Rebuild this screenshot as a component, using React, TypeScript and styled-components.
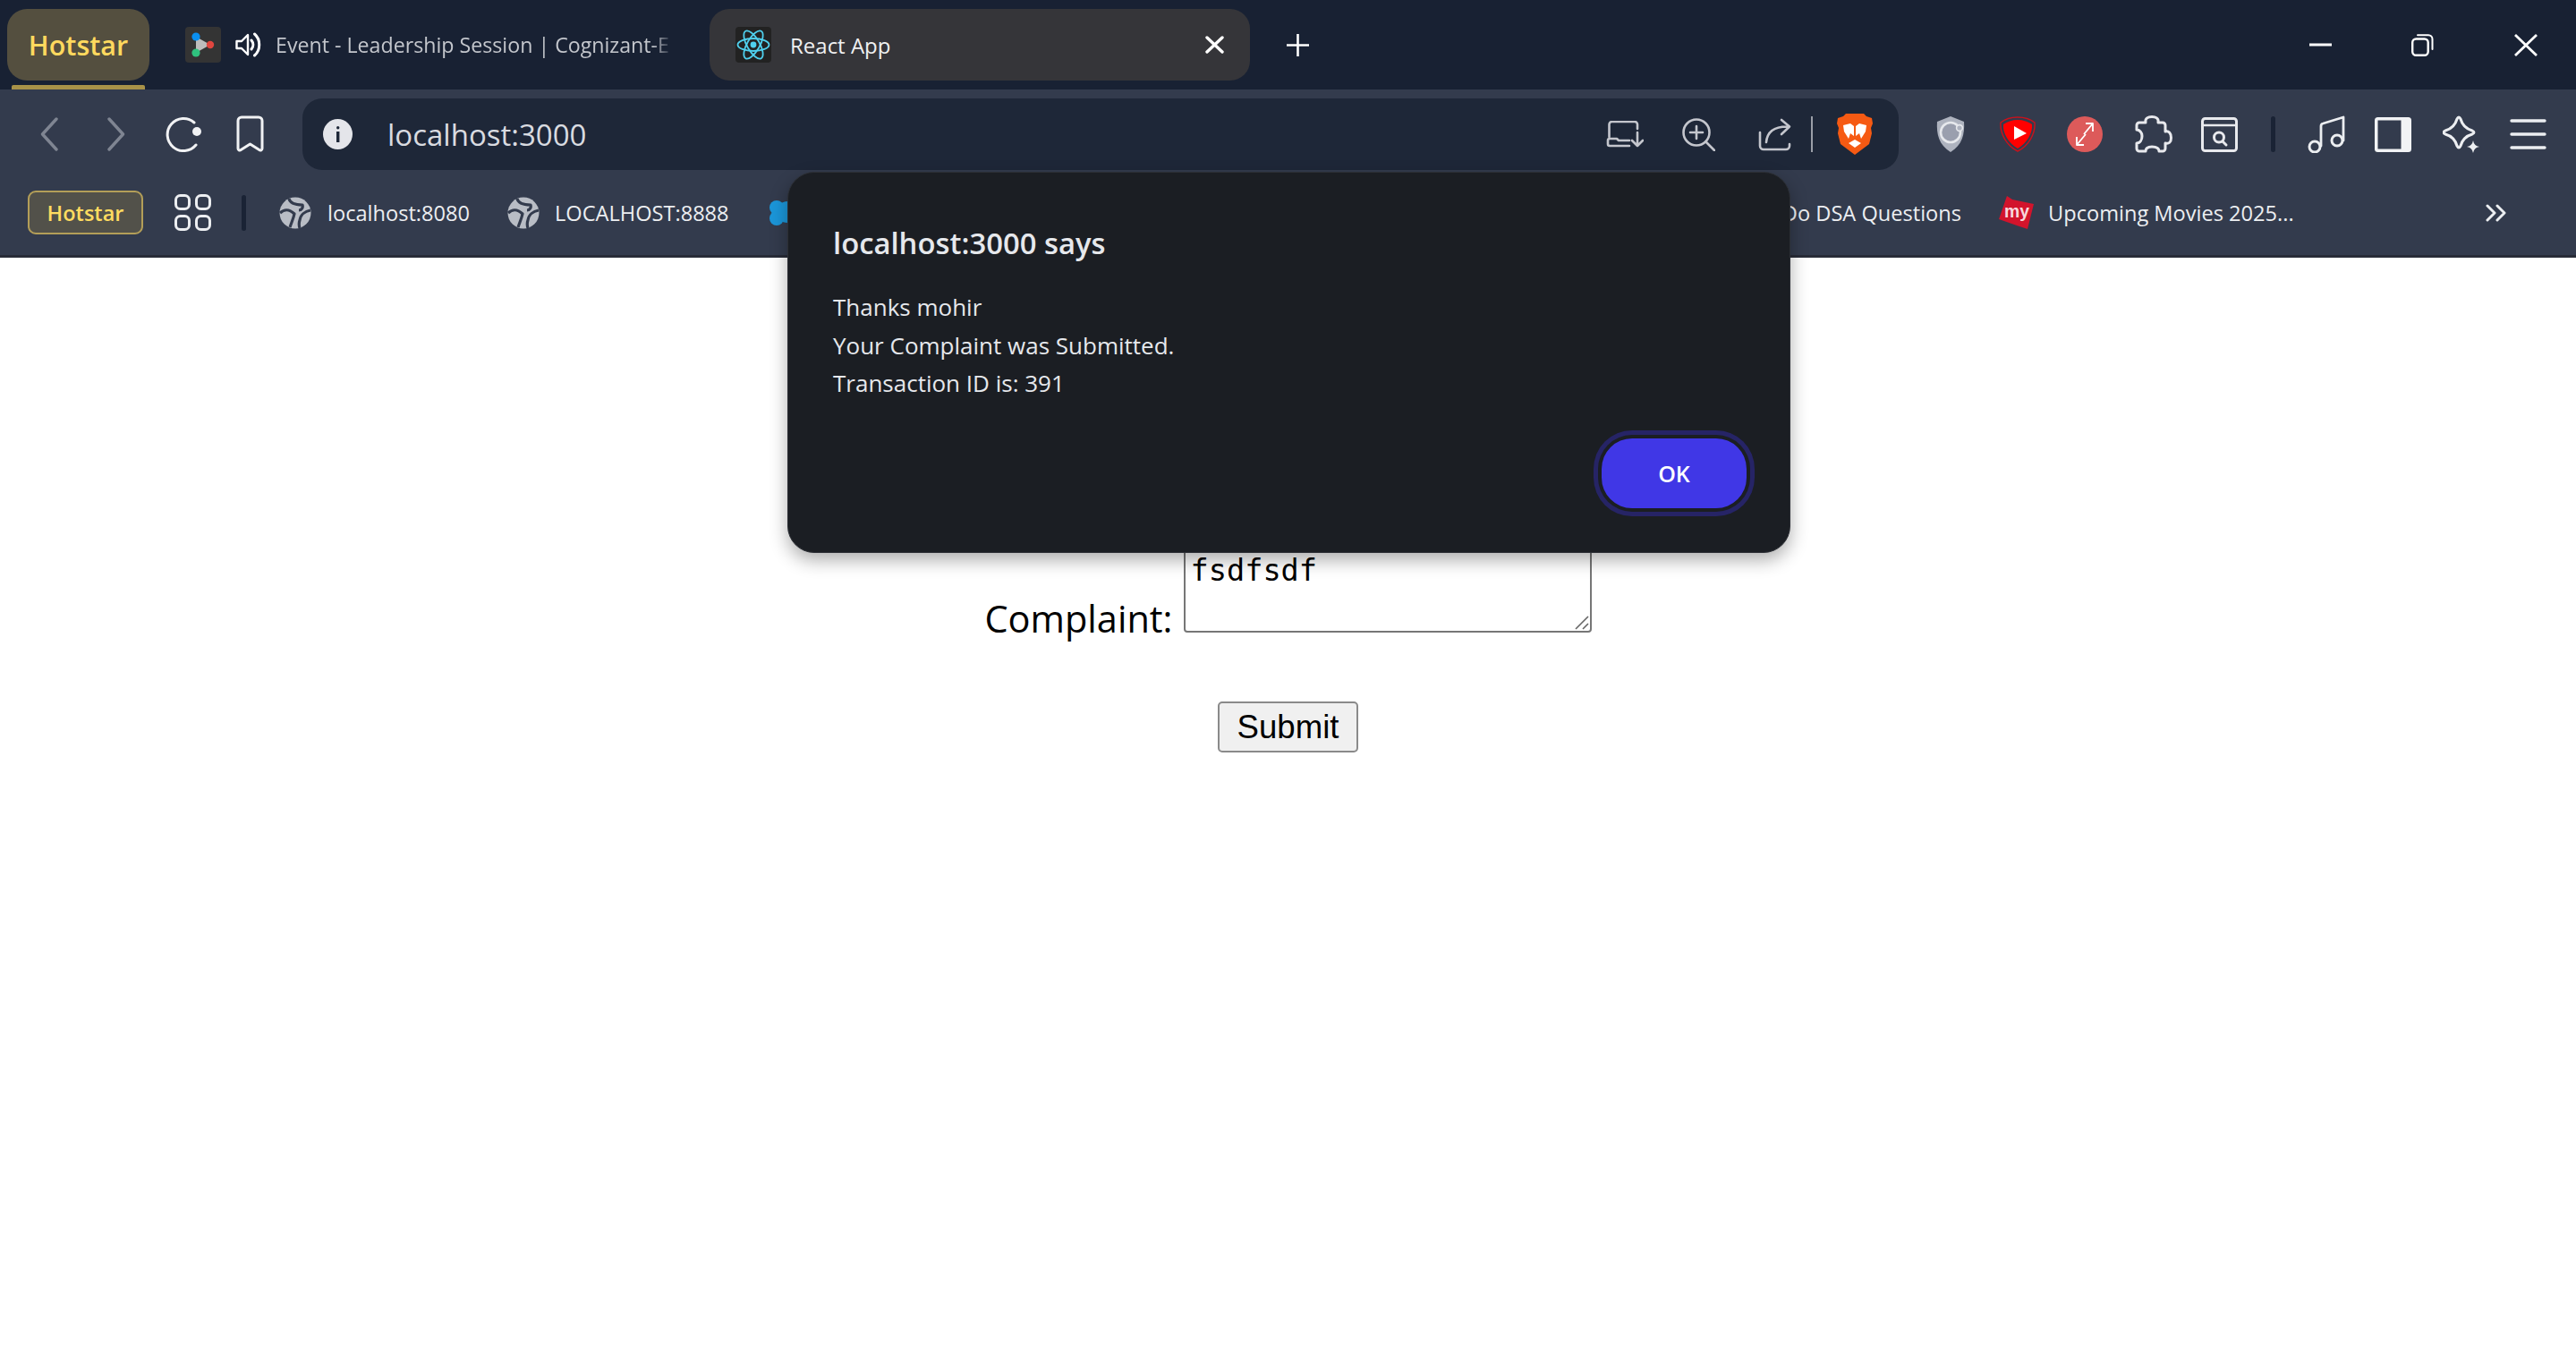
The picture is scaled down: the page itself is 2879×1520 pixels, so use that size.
import React from "react";
import styled, { createGlobalStyle } from "styled-components";

const UI = `"Open Sans", "Noto Sans", "Liberation Sans", sans-serif`;
const TITLE_BG = "#182133";
const BAR_BG = "#333b4d";
const FIELD_BG = "#1e2738";
const DIALOG_BG = "#1b1e23";
const ICON = "#eceef1";

const Global = createGlobalStyle`
  html, body { margin: 0; padding: 0; background: #fff; }
  body { font-family: ${UI}; }
`;

const Shell = styled.div`
  position: relative;
  width: 2879px;
  height: 1520px;
  overflow: hidden;
  background: #fff;
`;

const TitleBar = styled.div`
  display: flex;
  align-items: center;
  height: 100px;
  background: ${TITLE_BG};
`;

const Pinned = styled.div`
  display: flex;
  flex-direction: column;
  align-items: center;
  align-self: flex-start;
  width: 159px;
  margin: 10px 0 0 8px;
`;

const PinnedFace = styled.div`
  display: flex;
  align-items: center;
  justify-content: center;
  width: 100%;
  height: 80px;
  border-radius: 22px;
  background: #544f3f;
  color: #ffd95e;
  font-size: 30.5px;
  font-weight: 600;
`;

const PinnedLine = styled.div`
  width: 149px;
  height: 5px;
  margin-top: 5px;
  border-radius: 2px 2px 0 0;
  background: #a89248;
`;

const Tab = styled.div<{ $active?: boolean }>`
  display: flex;
  align-items: center;
  flex: none;
  height: 80px;
  width: ${(p) => (p.$active ? "604px" : "545px")};
  margin-left: ${(p) => (p.$active ? "41px" : "40px")};
  padding: ${(p) => (p.$active ? "0 29px" : "0")};
  box-sizing: border-box;
  border-radius: 22px;
  background: ${(p) => (p.$active ? "#353539" : "transparent")};
`;

const TabLabel = styled.div<{ $active?: boolean; $ml: number }>`
  flex: 1;
  min-width: 0;
  margin-left: ${(p) => p.$ml}px;
  overflow: hidden;
  white-space: nowrap;
  font-size: ${(p) => (p.$active ? "24px" : "23.2px")};
  color: ${(p) => (p.$active ? "#eff0f1" : "#c3c6cc")};
  ${(p) =>
    p.$active
      ? ""
      : "-webkit-mask-image: linear-gradient(to right, #000 95%, transparent 100%); mask-image: linear-gradient(to right, #000 95%, transparent 100%);"}
`;

const WindowControls = styled.div`
  display: flex;
  align-items: center;
  margin-left: auto;
  padding-right: 43px;
`;

const Glyph = styled.svg<{ $ml?: number }>`
  display: block;
  flex: none;
  margin-left: ${(p) => p.$ml ?? 0}px;
`;

const Toolbar = styled.div`
  display: flex;
  align-items: center;
  height: 80px;
  padding: 10px 0 0 45px;
  background: ${BAR_BG};
`;

const Omnibox = styled.div`
  display: flex;
  align-items: center;
  flex: none;
  width: 1784px;
  height: 80px;
  margin-left: 43px;
  padding: 0 29px 0 23px;
  box-sizing: border-box;
  border-radius: 22px;
  background: ${FIELD_BG};
`;

const Url = styled.div`
  flex: 1;
  margin-left: 39px;
  font-size: 33px;
  color: #d9dbe0;
`;

const ThinRule = styled.div`
  flex: none;
  width: 2px;
  height: 40px;
  margin-left: 22px;
  background: #9a9ea7;
`;

const DarkRule = styled.div<{ $ml: number; $h: number }>`
  flex: none;
  width: 5px;
  height: ${(p) => p.$h}px;
  margin-left: ${(p) => p.$ml}px;
  border-radius: 3px;
  background: #1a2335;
`;

const BookmarkBar = styled.div`
  display: flex;
  align-items: center;
  height: 95px;
  padding: 0 78px 0 31px;
  background: ${BAR_BG};
  border-bottom: 3px solid #282c38;
`;

const HotstarChip = styled.div`
  display: flex;
  align-items: center;
  justify-content: center;
  flex: none;
  width: 129px;
  height: 49px;
  box-sizing: border-box;
  border: 2.5px solid #b39e58;
  border-radius: 9px;
  background: #52514a;
  color: #ffdc60;
  font-size: 23.5px;
  font-weight: 600;
`;

const Mark = styled.div<{ $ml: number; $w: number; $right?: boolean }>`
  flex: none;
  width: ${(p) => p.$w}px;
  margin-left: ${(p) => p.$ml}px;
  font-size: 23.6px;
  color: #eceef1;
  white-space: nowrap;
  text-align: ${(p) => (p.$right ? "right" : "left")};
`;

const BookmarkEnd = styled.div`
  display: flex;
  align-items: center;
  margin-left: auto;
`;

const Page = styled.main`
  padding-top: 323px;
  text-align: center;
  color: #000;
`;

const FormRow = styled.div`
  display: block;
`;

const FieldLabel = styled.label`
  font-size: 41.5px;
  margin-right: 12px;
`;

const AreaWrap = styled.span`
  position: relative;
  display: inline-block;
  font-size: 0;
  line-height: 0;
`;

const Area = styled.textarea`
  display: inline-block;
  width: 456px;
  height: 96px;
  padding: 6px 6px;
  box-sizing: border-box;
  border: 2px solid #767676;
  border-radius: 4px;
  resize: none;
  outline: none;
  overflow: hidden;
  font-family: "DejaVu Sans Mono", "Liberation Mono", monospace;
  font-size: 33.6px;
  line-height: 38px;
  color: #000;
  background: #fff;
`;

const Grip = styled.svg`
  position: absolute;
  right: 2px;
  bottom: 2px;
`;

const SubmitRow = styled.div`
  margin-top: 65px;
`;

const Submit = styled.button`
  width: 157px;
  height: 57px;
  padding: 0;
  box-sizing: border-box;
  border: 2px solid #8a8a8a;
  border-radius: 5px;
  background: #f0f0f0;
  color: #000;
  font-family: "Liberation Sans", Arial, sans-serif;
  font-size: 36.6px;
`;

const Dialog = styled.div`
  position: absolute;
  left: 880px;
  top: 192px;
  width: 1121px;
  height: 426px;
  padding: 50px 48px 0 50px;
  box-sizing: border-box;
  border: 1px solid #2c2f35;
  border-radius: 30px;
  background: ${DIALOG_BG};
  box-shadow: 0 8px 20px rgba(0, 0, 0, 0.32);
  color: #e6e8ec;
`;

const DialogTitle = styled.div`
  height: 58px;
  line-height: 58px;
  font-size: 32.8px;
  font-weight: 600;
`;

const DialogBody = styled.div`
  margin-top: 21px;
  font-size: 26px;
  line-height: 42.6px;
`;

const DialogActions = styled.div`
  display: flex;
  justify-content: flex-end;
  margin-top: 40px;
`;

const OkButton = styled.button`
  width: 162px;
  height: 78px;
  border: 0;
  border-radius: 34px;
  background: #4037e6;
  color: #fff;
  font-family: ${UI};
  font-size: 25px;
  font-weight: 600;
  box-shadow: 0 0 0 4px ${DIALOG_BG}, 0 0 0 9px #262466;
`;

const s = { fill: "none", strokeLinecap: "round" as const, strokeLinejoin: "round" as const };

const Globe = ({ ml }: { ml: number }) => (
  <Glyph $ml={ml} width="36" height="36" viewBox="0 0 36 36">
    <circle cx="18" cy="18" r="17.5" fill="#b9bdc5" />
    <path
      fill="none"
      stroke={BAR_BG}
      strokeWidth="3.2"
      strokeLinejoin="round"
      d="M1 18 C5 14 11 13 17 19 C16 24 14 28 12 34 M11 2 C12 7 18 9 26 9 C27 12 25 15 22 15 M35 15 C29 16 24 20 23 26 C22 29 22 32 23 35"
    />
  </Glyph>
);

export default function App() {
  return (
    <Shell>
      <Global />
      <TitleBar>
        <Pinned>
          <PinnedFace>Hotstar</PinnedFace>
          <PinnedLine />
        </Pinned>
        <Tab>
          <Glyph width="40" height="40" viewBox="0 0 40 40">
            <rect width="40" height="40" rx="4" fill="#343434" />
            <path d="M12 11 L28 20 L12 29 Z" fill="#bdbdbd" />
            <circle cx="12" cy="11" r="4.6" fill="#0a8ff0" />
            <circle cx="28" cy="20" r="4.2" fill="#e0463f" />
            <circle cx="12" cy="29" r="4.6" fill="#2fc27e" />
          </Glyph>
          <Glyph $ml={16} width="29" height="28" viewBox="0 0 29 28">
            <path d="M1.5 10 H7 L14 3 V25 L7 18 H1.5 Z" {...s} stroke="#fff" strokeWidth="2.4" />
            <path d="M18 9 C20.5 12 20.5 16 18 19 M21.5 2 C28.5 8 28.5 20 21.5 26" {...s} stroke="#fff" strokeWidth="3" />
          </Glyph>
          <TabLabel $ml={16}>Event - Leadership Session | Cognizant-E</TabLabel>
        </Tab>
        <Tab $active>
          <Glyph width="40" height="40" viewBox="0 0 40 40">
            <rect width="40" height="40" rx="4" fill="#222" />
            <g fill="none" stroke="#4fd0ee" strokeWidth="1.8">
              <ellipse cx="20" cy="20" rx="17.5" ry="7" />
              <ellipse cx="20" cy="20" rx="17.5" ry="7" transform="rotate(60 20 20)" />
              <ellipse cx="20" cy="20" rx="17.5" ry="7" transform="rotate(120 20 20)" />
            </g>
            <circle cx="20" cy="20" r="3.4" fill="#4fd0ee" />
          </Glyph>
          <TabLabel $active $ml={21}>React App</TabLabel>
          <Glyph width="21" height="20" viewBox="0 0 21 20">
            <path d="M2 2 L19 18 M19 2 L2 18" {...s} stroke="#fff" strokeWidth="3.4" />
          </Glyph>
        </Tab>
        <Glyph $ml={40} width="27" height="27" viewBox="0 0 27 27">
          <path d="M13.5 1 V26 M1 13.5 H26" {...s} stroke="#fff" strokeWidth="2.6" strokeLinecap="butt" />
        </Glyph>
        <WindowControls>
          <Glyph width="25" height="4" viewBox="0 0 25 4">
            <rect width="25" height="3" y="0.5" fill="#fff" />
          </Glyph>
          <Glyph $ml={89} width="25" height="25" viewBox="0 0 25 25">
            <rect x="1.2" y="5.5" width="17.5" height="18.3" rx="4" {...s} stroke="#fff" strokeWidth="2.4" />
            <path d="M7 1.2 H19 a4.5 4.5 0 0 1 4.5 4.5 V17" {...s} stroke="#fff" strokeWidth="2" />
          </Glyph>
          <Glyph $ml={90} width="26" height="25" viewBox="0 0 26 25">
            <path d="M1 1 L25 24 M25 1 L1 24" {...s} stroke="#fff" strokeWidth="2.8" strokeLinecap="butt" />
          </Glyph>
        </WindowControls>
      </TitleBar>

      <Toolbar>
        <Glyph width="20" height="38" viewBox="0 0 20 38">
          <path d="M18 2 L2.5 19 L18 36" {...s} stroke="#7f8592" strokeWidth="3.4" />
        </Glyph>
        <Glyph $ml={55} width="20" height="38" viewBox="0 0 20 38">
          <path d="M2 2 L17.5 19 L2 36" {...s} stroke="#7f8592" strokeWidth="3.4" />
        </Glyph>
        <Glyph $ml={45} width="41" height="40" viewBox="0 0 41 40">
          <path d="M32 7 A18 18 0 1 0 34 32" {...s} stroke="#f1f2f4" strokeWidth="3" />
          <circle cx="35" cy="17" r="5" fill="#f1f2f4" />
        </Glyph>
        <Glyph $ml={38} width="31" height="42" viewBox="0 0 31 42">
          <path
            d="M2 6 a4 4 0 0 1 4-4 H25 a4 4 0 0 1 4 4 V37 a2 2 0 0 1-3.2 1.6 L15.5 32 5.2 38.6 A2 2 0 0 1 2 37 Z"
            {...s}
            stroke="#f1f2f4"
            strokeWidth="3"
          />
        </Glyph>
        <Omnibox>
          <Glyph width="33" height="34" viewBox="0 0 33 34">
            <ellipse cx="16.5" cy="17" rx="16.5" ry="17" fill="#e4e5ea" />
            <rect x="15" y="14" width="3.4" height="12" fill={FIELD_BG} />
            <rect x="15" y="8" width="3.4" height="3.4" rx="1.7" fill={FIELD_BG} />
          </Glyph>
          <Url>localhost:3000</Url>
          <Glyph width="42" height="30" viewBox="0 0 42 30">
            <path d="M3.5 18 V4 a3 3 0 0 1 3-3 H32 a3 3 0 0 1 3 3 V9" {...s} stroke="#c4c6cd" strokeWidth="2.6" />
            <path d="M2 22 a2 2 0 0 1 2-2 H12 l2 2 H26 M2 22 v4 a2 2 0 0 0 2 2 H26" {...s} stroke="#c4c6cd" strokeWidth="2.6" />
            <path d="M35 13 V28 M29 22 L35 28 L41 22" {...s} stroke="#c4c6cd" strokeWidth="2.6" />
          </Glyph>
          <Glyph $ml={43} width="37" height="37" viewBox="0 0 37 37">
            <circle cx="16" cy="16" r="14.5" {...s} stroke="#c4c6cd" strokeWidth="2.6" />
            <path d="M26.5 26.5 L36 36 M16 9 V23 M9 16 H23" {...s} stroke="#c4c6cd" strokeWidth="2.6" />
          </Glyph>
          <Glyph $ml={48} width="37" height="37" viewBox="0 0 37 37">
            <path d="M2 16 V31 a4 4 0 0 0 4 4 H31 a4 4 0 0 0 4-4 V29" {...s} stroke="#c4c6cd" strokeWidth="2.6" />
            <path d="M9 27 C10 15 18 9 34 9.5 M26 2 L35 9.5 L26 18" {...s} stroke="#c4c6cd" strokeWidth="2.6" />
          </Glyph>
          <ThinRule />
          <Glyph $ml={27} width="40" height="46" viewBox="0 0 40 46">
            <path d="M10 0 H30 L33 3 L39 5 L40 11 L38 16 L39 22 L36 34 L20 46 L4 34 L1 22 L2 16 L0 11 L1 5 L7 3 Z" fill="#f65a13" />
            <path d="M7 13 L15 11 L19 14 V25 L15 22 L13 28 L8 20 Z M33 13 L25 11 L21 14 V25 L25 22 L27 28 L32 20 Z" fill="#fff" />
            <path d="M13 33 L20 29 L27 33 L20 38 Z" fill="#fff" />
          </Glyph>
        </Omnibox>
        <Glyph $ml={42} width="32" height="40" viewBox="0 0 32 40">
          <path d="M16 0 L31 6 C32 20 29 32 16 40 C3 32 0 20 1 6 Z" fill="#aeb3bf" />
          <circle cx="16" cy="18" r="11" fill="#9a9fae" stroke="#e6e8ec" strokeWidth="2.6" />
          <circle cx="26" cy="13" r="3.4" fill="#aeb3bf" stroke="#e6e8ec" strokeWidth="1.6" />
        </Glyph>
        <Glyph $ml={39} width="40" height="40" viewBox="0 0 40 40">
          <path d="M20 1 C27 1 34 3 39 7 C40 20 32 33 20 39 C8 33 0 20 1 7 C6 3 13 1 20 1 Z" fill="none" stroke="#c9121c" strokeWidth="1.4" />
          <path d="M20 4 C26 4 32 6 36 9 C37 19 30 30 20 36 C10 30 3 19 4 9 C8 6 14 4 20 4 Z" fill="#ff0000" />
          <path d="M16 11 L30 19 L16 26 Z" fill="#fff" />
        </Glyph>
        <Glyph $ml={35} width="40" height="40" viewBox="0 0 40 40">
          <circle cx="20" cy="20" r="20" fill="#dd5a5a" />
          <path d="M21 8 H29 V17 M29 8 L19 20 M11 23 V32 H19 M11 32 L21 20" {...s} stroke="#fff" strokeWidth="1.8" strokeLinecap="butt" />
        </Glyph>
        <Glyph $ml={36} width="42" height="42" viewBox="0 0 42 42">
          <path
            d="M12 8 C11 3 15 1.5 19 1.5 C23 1.5 27 3 26 8 H31 a3 3 0 0 1 3 3 V18 C38 17 40.5 20 40.5 25 C40.5 30 38 32 34 31 V37 a3 3 0 0 1-3 3 H27 C27 37 24 35 19 35 C14 35 12 37 12 40 H5 a3 3 0 0 1-3-3 V31 C6 31 8 27 8 23 C8 19 5 16 2 16 V11 a3 3 0 0 1 3-3 Z"
            {...s}
            stroke="#e8e9ed"
            strokeWidth="3"
          />
        </Glyph>
        <Glyph $ml={32} width="41" height="39" viewBox="0 0 41 39">
          <rect x="1.5" y="1.5" width="38" height="36" rx="3" {...s} stroke="#e8e9ed" strokeWidth="3" />
          <path d="M2 9 H39" {...s} stroke="#e8e9ed" strokeWidth="2.5" />
          <circle cx="20" cy="22.5" r="5.5" {...s} stroke="#e8e9ed" strokeWidth="3" />
          <path d="M24 27 L28 31" {...s} stroke="#e8e9ed" strokeWidth="3" />
        </Glyph>
        <DarkRule $ml={37} $h={40} />
        <Glyph $ml={36} width="42" height="42" viewBox="0 0 42 42">
          <path d="M15 34 V12 a3 3 0 0 1 2.3-3 L40 2 V28" {...s} stroke={ICON} strokeWidth="2.8" />
          <circle cx="8" cy="35" r="6" {...s} stroke={ICON} strokeWidth="3" />
          <circle cx="33" cy="28" r="6" {...s} stroke={ICON} strokeWidth="3" />
        </Glyph>
        <Glyph $ml={33} width="41" height="39" viewBox="0 0 41 39">
          <rect width="41" height="39" rx="3.5" fill="#f2f3f5" />
          <rect x="3.5" y="3.5" width="26" height="32" fill={BAR_BG} />
        </Glyph>
        <Glyph $ml={35} width="41" height="42" viewBox="0 0 41 42">
          <path
            d="M16 4 Q18 0 20 4 C22 11 26 15 33 17 Q37 19 33 21 C26 23 22 27 20 34 Q18 38 16 34 C14 27 10 23 3 21 Q-1 19 3 17 C10 15 14 11 16 4 Z"
            {...s}
            stroke={ICON}
            strokeWidth="3"
          />
          <path d="M34 28 Q35 34 41 35 Q35 36 34 42 Q33 36 27 35 Q33 34 34 28 Z" fill={ICON} />
        </Glyph>
        <Glyph $ml={34} width="41" height="34" viewBox="0 0 41 34">
          <path d="M2 2 H39 M2 17 H39 M2 32 H39" {...s} stroke={ICON} strokeWidth="3.4" />
        </Glyph>
      </Toolbar>

      <BookmarkBar>
        <HotstarChip>Hotstar</HotstarChip>
        <Glyph $ml={35} width="41" height="41" viewBox="0 0 41 41">
          <rect x="1.5" y="1.5" width="15" height="15" rx="5" {...s} stroke={ICON} strokeWidth="3" />
          <rect x="24.5" y="1.5" width="15" height="15" rx="5" {...s} stroke={ICON} strokeWidth="3" />
          <rect x="1.5" y="24.5" width="15" height="15" rx="5" {...s} stroke={ICON} strokeWidth="3" />
          <rect x="24.5" y="24.5" width="15" height="15" rx="5" {...s} stroke={ICON} strokeWidth="3" />
        </Glyph>
        <DarkRule $ml={34} $h={40} />
        <Globe ml={37} />
        <Mark $ml={18} $w={157}>localhost:8080</Mark>
        <Globe ml={44} />
        <Mark $ml={17} $w={196}>LOCALHOST:8888</Mark>
        <Glyph $ml={44} width="40" height="30" viewBox="0 0 40 30">
          <circle cx="8" cy="9" r="8" fill="#1b96d9" />
          <circle cx="8" cy="21" r="8" fill="#1b96d9" />
          <circle cx="20" cy="14" r="12" fill="#1b96d9" />
        </Glyph>
        <BookmarkEnd>
          <Mark $ml={0} $w={209} $right>Do DSA Questions</Mark>
          <Glyph $ml={42} width="39" height="37" viewBox="0 0 39 37">
            <path d="M9 0 L15 4 L39 9 L32 37 L20 33 L0 26 Z" fill="#d2142c" />
            <text x="6" y="24" fontFamily="Liberation Sans, sans-serif" fontWeight="700" fontSize="21" fill="#f8d7dc" textLength="28" lengthAdjust="spacingAndGlyphs">my</text>
          </Glyph>
          <Mark $ml={16} $w={278}>Upcoming Movies 2025...</Mark>
          <Glyph $ml={211} width="23" height="20" viewBox="0 0 23 20">
            <path d="M2 2 L10 10 L2 18 M13 2 L21 10 L13 18" {...s} stroke={ICON} strokeWidth="3" />
          </Glyph>
        </BookmarkEnd>
      </BookmarkBar>

      <Page>
        <FormRow>
          <FieldLabel htmlFor="complaint">Complaint:</FieldLabel>
          <AreaWrap>
            <Area id="complaint" defaultValue="fsdfsdf" />
            <Grip width="18" height="18" viewBox="0 0 18 18">
              <path d="M2 16 L16 2 M10 16 L16 10" fill="none" stroke="#666" strokeWidth="1.6" />
            </Grip>
          </AreaWrap>
        </FormRow>
        <SubmitRow>
          <Submit type="button">Submit</Submit>
        </SubmitRow>
      </Page>

      <Dialog role="alertdialog">
        <DialogTitle>localhost:3000 says</DialogTitle>
        <DialogBody>
          <div>Thanks mohir</div>
          <div>Your Complaint was Submitted.</div>
          <div>Transaction ID is: 391</div>
        </DialogBody>
        <DialogActions>
          <OkButton type="button">OK</OkButton>
        </DialogActions>
      </Dialog>
    </Shell>
  );
}
